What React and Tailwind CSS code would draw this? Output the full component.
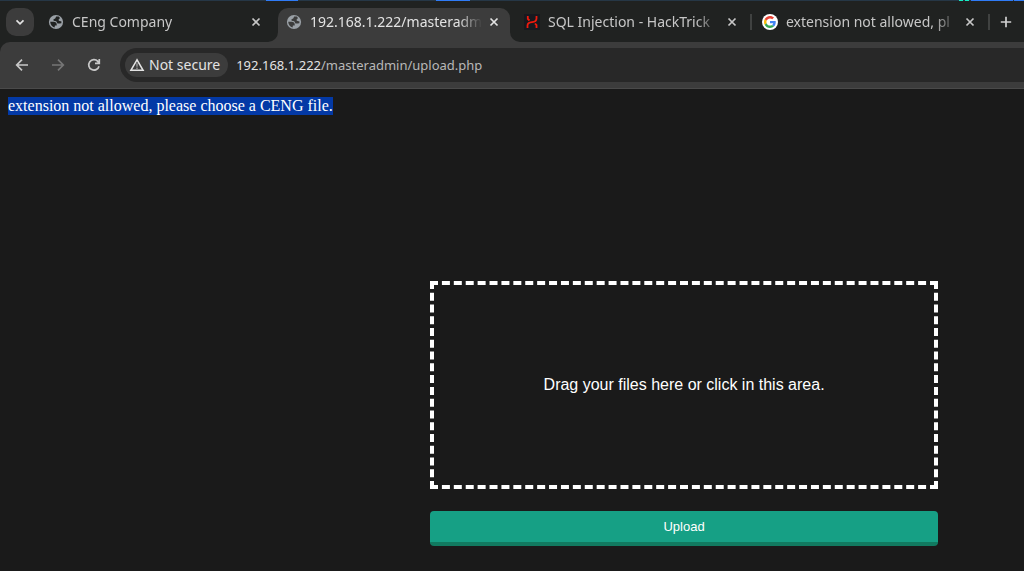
import React from "react";

function HackTricksIcon() {
  return (
    <svg viewBox="0 0 16 16" className="size-4 shrink-0 bg-[#17191f]" aria-hidden="true">
      <g fill="none" stroke="#f01a0c" strokeWidth="1.8">
        <path d="M3.800 2v2.800L5.500 6.500M3.500 14v-2.500c0-2.300 1.500-3 4.500-3.300s4.500-1.500 4.500-3.700V2M12.500 14v-2.800L11 9.500" />
      </g>
    </svg>
  );
}

function GoogleIcon() {
  return (
    <svg viewBox="0 0 16 16" className="size-4 shrink-0" aria-hidden="true">
      <circle cx="8" cy="8" r="8" fill="#fff" />
      <g transform="translate(2 2) scale(.25)">
        <path fill="#EA4335" d="M24 9.500c3.540 0 6.710 1.220 9.210 3.600l6.850-6.850C35.900 2.380 30.470 0 24 0 14.620 0 6.510 5.380 2.560 13.220l7.980 6.190C12.430 13.720 17.740 9.500 24 9.500z" />
        <path fill="#4285F4" d="M46.980 24.550c0-1.570-.15-3.090-.38-4.550H24v9.020h12.940c-.58 2.960-2.260 5.480-4.780 7.180l7.730 6c4.510-4.180 7.090-10.360 7.090-17.650z" />
        <path fill="#FBBC05" d="M10.530 28.590c-.48-1.450-.76-2.990-.76-4.590s.27-3.140.76-4.590l-7.980-6.190C.92 16.460 0 20.120 0 24s.92 7.540 2.560 10.780l7.970-6.190z" />
        <path fill="#34A853" d="M24 48c6.480 0 11.930-2.130 15.890-5.810l-7.730-6c-2.150 1.450-4.920 2.300-8.160 2.300-6.260 0-11.570-4.220-13.470-9.910l-7.980 6.190C6.510 42.620 14.620 48 24 48z" />
      </g>
    </svg>
  );
}

function Globe({ land }) {
  return (
    <svg viewBox="0 0 16 16" className="size-4 shrink-0" aria-hidden="true">
      <circle cx="8" cy="8" r="7.100" fill="#9aa0a6" />
      <path
        fill={land}
        d="M2.200 7.800h3.600c1.700 0 2.900 1 2.900 2.500v1.200H6.900l-.3 2C4.200 12.900 2.300 10.700 2.200 7.800zM5.500 5.200l1.700-.8 1-1.900 2.500.1 1.300 1.500-1.500 1.700.4 1 2.600.7-.2 1.700-1.900.4H9.500L8.200 7.200 5.600 6.700z"
      />
    </svg>
  );
}

const glyphs = {
  close: "M4.500 4.500l7 7M11.500 4.500l-7 7",
  plus: "M8 2.800v10.400M2.800 8h10.400",
  chevron: "M4.500 6.300 8 9.800l3.500-3.500",
  back: "M14 8H3M8 2.700 2.700 8 8 13.300",
  forward: "M2 8h11M8 2.700 13.300 8 8 13.300",
  reload: "M13 9.200A5.200 5.200 0 1 1 11.800 4.400l1.200 1.400M13.300 2v4.300H9",
};

function Glyph({ name }) {
  return (
    <svg viewBox="0 0 16 16" className="size-4" aria-hidden="true">
      <path d={glyphs[name]} fill="none" stroke="currentColor" strokeWidth="1.700" />
    </svg>
  );
}

function Corner({ className }) {
  return (
    <svg viewBox="0 0 10 10" className={`absolute bottom-0 size-[10px] ${className}`} aria-hidden="true">
      <path fill="#3c3c3c" d="M10 0v10H0A10 10 0 0 0 10 0z" />
    </svg>
  );
}

const tabs = [
  { title: "CEng Company", icon: <Globe land="#202221" /> },
  { title: "192.168.1.222/masteradm", icon: <Globe land="#3c3c3c" />, active: true },
  { title: "SQL Injection - HackTrick", icon: <HackTricksIcon />, divider: true },
  { title: "extension not allowed, pl", icon: <GoogleIcon />, divider: true },
];

function Tab({ title, icon, active, divider }) {
  return (
    <div
      role="tab"
      aria-selected={!!active}
      className={`relative flex h-[34px] w-[232px] min-w-0 items-center rounded-t-[10px] pr-2 pb-[6px] pl-2 ${active ? "bg-[#3c3c3c] text-[#e3e3e3]" : "text-[#c7c7c7]"}`}
    >
      {active && <Corner className="-left-[10px]" />}
      {active && <Corner className="-right-[10px] -scale-x-100" />}
      {icon}
      <span className="ml-2 min-w-0 flex-1 overflow-hidden text-sm leading-5 whitespace-nowrap [mask-image:linear-gradient(to_left,transparent,black_24px)]">
        {title}
      </span>
      <button type="button" aria-label={`Close ${title}`} className="ml-1 grid size-4 shrink-0 place-items-center">
        <Glyph name="close" />
      </button>
      {divider && <span className="absolute top-[6px] -right-1 h-4 w-[2px] bg-[#404241]" />}
    </div>
  );
}

export default function App() {
  return (
    <div className="min-h-screen bg-[#1a1a1a] text-white">
      <header className="bg-[#202221] font-['Noto_Sans',sans-serif]">
        <div className="flex h-px bg-[#263746]">
          <span className="ml-[26%] w-8 bg-[#2f7bf6]" />
          <span className="ml-[13.5%] w-[34px] bg-[#2f7bf6]" />
          <span className="ml-auto w-1 bg-[#16efc4]" />
          <span className="ml-[2px] w-1 bg-[#16efc4]" />
          <span className="ml-[2px] w-[42px] bg-[#2f7bf6]" />
          <span className="ml-px w-[10px] bg-[#2f7bf6]" />
        </div>
        <div className="flex h-[41px] items-start overflow-hidden pt-[7px] pl-[6px]">
          <button type="button" aria-label="Search tabs" className="grid size-7 shrink-0 place-items-center rounded-[10px] bg-[#3c3c3c] text-[#e3e3e3]">
            <Glyph name="chevron" />
          </button>
          <div role="tablist" className="ml-[6px] flex min-w-0 gap-[6px]">
            {tabs.map((tab) => (
              <Tab key={tab.title} {...tab} />
            ))}
          </div>
          <button type="button" aria-label="New tab" className="ml-[10px] grid h-7 w-5 shrink-0 place-items-center text-[#d0d0d0]">
            <Glyph name="plus" />
          </button>
        </div>
        <div className="flex h-[47px] items-center overflow-hidden rounded-tl-[10px] border-b border-[#4a4a4a] bg-[#3c3c3c] pl-[14px]">
          <nav className="flex gap-5 text-[#c7c7c7]" aria-label="History">
            <button type="button" aria-label="Back"><Glyph name="back" /></button>
            <button type="button" aria-label="Forward" className="text-[#757575]"><Glyph name="forward" /></button>
            <button type="button" aria-label="Reload"><Glyph name="reload" /></button>
          </nav>
          <div className="-mr-8 ml-[18px] flex h-[34px] flex-1 items-center rounded-full bg-[#282828] pl-[5px]">
            <button type="button" className="flex h-6 items-center gap-1 rounded-full bg-[#3c3c3c] pr-2 pl-1 text-sm leading-5 text-[#e3e3e3]">
              <svg viewBox="0 0 16 16" className="size-4" aria-hidden="true">
                <path d="M8 2.800 1.900 13.300h12.200z" fill="none" stroke="currentColor" strokeWidth="1.500" />
                <path d="M8 6.200v3.600M8 10.600v1.500" stroke="#999" strokeWidth="1.400" />
              </svg>
              Not secure
            </button>
            <a href="#page" className="ml-2 text-[13px] leading-5 text-[#b8b8b8]">
              <span className="text-[#e3e3e3]">192.168.1.222</span>/masteradmin/upload.php
            </a>
          </div>
        </div>
      </header>
      <main id="page" className="pt-2">
        <p className="px-2 font-['Liberation_Serif',serif] text-base leading-[18px]">
          <mark className="inline-block bg-[#0339a6] text-white">extension not allowed, please choose a CENG file.</mark>
        </p>
        <form className="mt-[166px] ml-[42%] max-w-[508px] pb-6 font-['Liberation_Sans',sans-serif]" onSubmit={(e) => e.preventDefault()}>
          <label htmlFor="files" className="flex h-52 cursor-pointer items-center justify-center border-4 border-dashed border-white text-base">
            Drag your files here or click in this area.
          </label>
          <input id="files" type="file" multiple className="sr-only" />
          <button type="submit" className="mt-[22px] h-[35px] w-full rounded-[4px] border-b-4 border-[#117a60] bg-[#16a085] text-[13px] text-white">
            Upload
          </button>
        </form>
      </main>
    </div>
  );
}
